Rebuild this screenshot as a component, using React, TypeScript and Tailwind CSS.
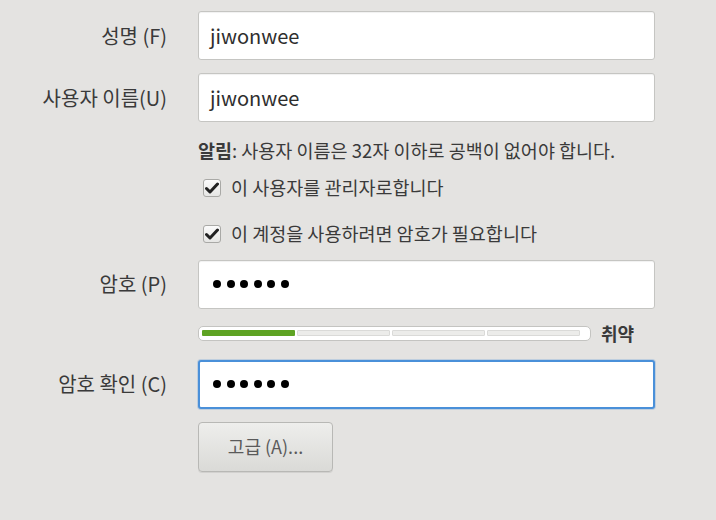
import React from "react";

const font = { fontFamily: '"Noto Sans CJK KR", "Noto Sans", sans-serif' };

type FieldProps = {
    label: string;
    children: React.ReactNode;
};

const Field: React.FC<FieldProps> = ({ label, children }) => {
    return (
        <div className="flex items-center">
            <label className="w-[168px] shrink-0 pr-px text-right text-[20px] text-[#3a3a3a]">{label}</label>
            <div className="ml-[30px]">{children}</div>
        </div>
    );
};

const Entry = ({ value }: { value: string }) => {
    return (
        <div className="flex h-[49px] w-[457px] items-center rounded-[3px] border border-[#c5c5c2] bg-white pl-[11px] shadow-[inset_0_1px_1px_rgba(0,0,0,0.06)]">
            <span className="text-[20px] text-[#2e2e2e]">{value}</span>
        </div>
    );
};

const Dots = ({ focused = false }: { focused?: boolean }) => {
    return (
        <div
            className={
                focused
                    ? "flex h-[49px] w-[457px] items-center gap-[5.5px] rounded-[3px] border-2 border-[#4a90d9] bg-white pl-[13px] shadow-[0_0_0_1px_rgba(74,144,217,0.25)]"
                    : "flex h-[49px] w-[457px] items-center gap-[5.5px] rounded-[3px] border border-[#c5c5c2] bg-white pl-[14px] shadow-[inset_0_1px_1px_rgba(0,0,0,0.06)]"
            }
        >
            {[0, 1, 2, 3, 4, 5].map((i) => (
                <span key={i} className="h-[8px] w-[8px] rounded-full bg-black" />
            ))}
        </div>
    );
};

const Check = ({ text }: { text: string }) => {
    return (
        <div className="flex items-center">
            <span className="ml-[5px] flex h-[18px] w-[18px] items-center justify-center rounded-[3px] border border-[#a9a9a6] bg-gradient-to-b from-[#fbfbfb] to-[#e6e6e4]">
                <svg width="14" height="12" viewBox="0 0 14 12">
                    <path d="M1.5 6.5 L5 10 L12.5 2" fill="none" stroke="#222" strokeWidth="3" strokeLinecap="round" strokeLinejoin="round" />
                </svg>
            </span>
            <span className="ml-[10px] text-[18.5px] text-[#3a3a3a]">{text}</span>
        </div>
    );
};

const Strength = () => {
    return (
        <div className="flex items-center">
            <div className="flex h-[15px] w-[393px] items-center gap-[2px] rounded-[5px] border border-[#c4c4c1] bg-white px-[3px]">
                <span className="h-[6px] w-[93px] rounded-[1px] bg-[#5ea323]" />
                <span className="h-[6px] w-[93px] rounded-[1px] border border-[#dadad8] bg-[#ececea]" />
                <span className="h-[6px] w-[93px] rounded-[1px] border border-[#dadad8] bg-[#ececea]" />
                <span className="h-[6px] w-[93px] rounded-[1px] border border-[#dadad8] bg-[#ececea]" />
            </div>
            <span className="ml-[10px] text-[18px] font-bold text-[#3a3a3a]">취약</span>
        </div>
    );
};

export default function App() {
    return (
        <div className="h-[520px] w-[716px] overflow-hidden bg-[#e4e3e1]" style={font}>
            <div className="flex flex-col pt-[11px]">
                <Field label="성명 (F)">
                    <Entry value="jiwonwee" />
                </Field>
                <div className="mt-[13px]">
                    <Field label="사용자 이름(U)">
                        <Entry value="jiwonwee" />
                    </Field>
                </div>
                <div className="ml-[198px] mt-[14px] flex flex-col">
                    <p className="text-[18.5px] leading-[28px] text-[#3a3a3a]">
                        <span className="font-bold">알림</span>: 사용자 이름은 32자 이하로 공백이 없어야 합니다.
                    </p>
                    <div className="mt-[10px]">
                        <Check text="이 사용자를 관리자로합니다" />
                    </div>
                    <div className="mt-[18px]">
                        <Check text="이 계정을 사용하려면 암호가 필요합니다" />
                    </div>
                </div>
                <div className="mt-[12px]">
                    <Field label="암호 (P)">
                        <Dots />
                    </Field>
                </div>
                <div className="ml-[198px] mt-[11px]">
                    <Strength />
                </div>
                <div className="mt-[13px]">
                    <Field label="암호 확인 (C)">
                        <Dots focused />
                    </Field>
                </div>
                <div className="ml-[198px] mt-[13px]">
                    <button className="flex h-[50px] w-[135px] items-center justify-center rounded-[4px] border border-[#b8b8b5] bg-gradient-to-b from-[#eeeeec] to-[#dadad7] text-[18px] text-[#5a5a5a] shadow-[0_1px_0_rgba(0,0,0,0.08)]">
                        고급 (A)...
                    </button>
                </div>
            </div>
        </div>
    );
}
